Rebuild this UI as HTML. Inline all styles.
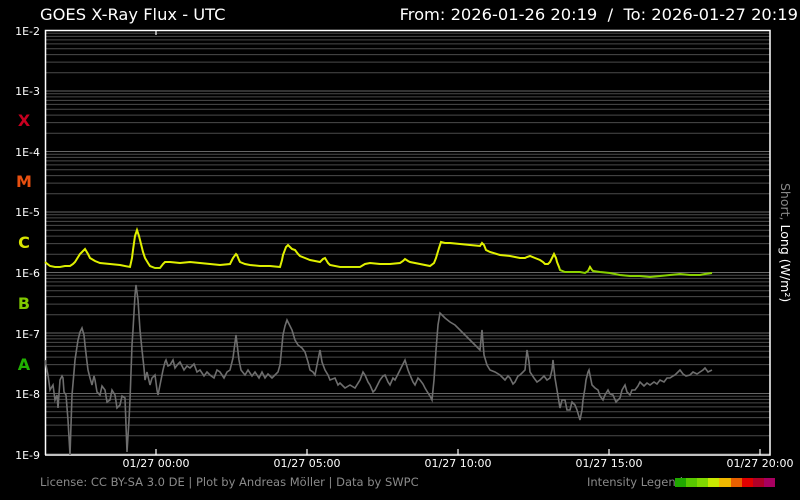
<!DOCTYPE html>
<html><head><meta charset="utf-8"><style>
html,body{margin:0;padding:0;background:#000;width:800px;height:500px;overflow:hidden}
svg{display:block}
text{font-family:"DejaVu Sans","Liberation Sans",sans-serif}
</style></head><body>
<svg width="800" height="500" viewBox="0 0 800 500">
<defs>
<pattern id="g" patternUnits="userSpaceOnUse" x="0" y="30" width="800" height="60.5">
<g stroke="#4a4a4a" stroke-width="1">
<line x1="0" x2="800" y1="0.5" y2="0.5" stroke="#666"/>
<line x1="0" x2="800" y1="3.3" y2="3.3"/>
<line x1="0" x2="800" y1="6.4" y2="6.4"/>
<line x1="0" x2="800" y1="9.9" y2="9.9"/>
<line x1="0" x2="800" y1="13.9" y2="13.9"/>
<line x1="0" x2="800" y1="18.7" y2="18.7"/>
<line x1="0" x2="800" y1="24.6" y2="24.6"/>
<line x1="0" x2="800" y1="32.1" y2="32.1"/>
<line x1="0" x2="800" y1="42.8" y2="42.8"/>
</g>
</pattern>
<linearGradient id="lg" gradientUnits="userSpaceOnUse" x1="0" y1="266" x2="0" y2="272">
<stop offset="0" stop-color="#e0f000"/><stop offset="1" stop-color="#88d000"/>
</linearGradient>
</defs>
<rect width="800" height="500" fill="#000"/>
<rect x="45" y="30" width="725" height="424" fill="url(#g)"/>
<g fill="none" stroke="#fff" stroke-width="1.5">
<polyline points="45.5,455 45.5,30.5 770,30.5 770,455 45,455"/>
</g>
<g stroke="#fff" stroke-width="1.2">
<line x1="156" y1="30" x2="156" y2="35"/><line x1="156" y1="449" x2="156" y2="455"/>
<line x1="307" y1="449" x2="307" y2="455"/><line x1="458" y1="449" x2="458" y2="455"/>
<line x1="609" y1="449" x2="609" y2="455"/><line x1="760" y1="449" x2="760" y2="455"/>
</g>
<polyline fill="none" stroke="#6e6e6e" stroke-width="1.6" points="45,360 48,375 50,390 53,385 55,400 57,395 58,408 60,380 62,376 63,378 64,392 66,395 68,420 70,455 72,395 74,372 75,360 78,340 80,332 82,328 84,335 85,345 87,362 88,370 90,378 92,385 94,376 95,380 97,392 100,395 102,386 105,390 107,402 110,400 112,390 115,395 117,408 120,405 122,396 125,398 127,452 129,420 130,400 132,345 133,330 135,295 136,285 138,300 140,330 142,350 144,368 145,380 147,372 150,385 152,378 155,375 157,390 158,395 160,385 163,370 165,362 166,360 168,366 170,365 173,360 175,368 178,364 180,362 184,370 187,366 190,368 194,364 197,372 200,370 204,376 207,372 210,375 214,378 217,370 220,372 224,378 227,372 230,370 233,358 236,335 239,360 241,370 245,375 248,370 252,376 255,372 259,378 262,372 265,378 268,374 272,378 275,375 278,372 280,365 282,345 283,335 285,326 287,320 290,326 292,330 295,340 298,345 302,348 305,352 308,362 310,370 313,372 315,375 318,360 320,350 322,362 325,370 328,375 330,380 335,378 338,385 340,383 345,388 350,385 355,388 360,380 363,372 365,375 368,382 370,385 373,392 375,390 378,384 380,380 383,376 385,375 388,382 390,385 393,378 395,380 398,374 400,370 403,364 405,360 408,370 410,375 413,382 415,385 418,378 420,380 423,384 425,388 428,393 430,396 432,400 434,380 436,350 438,325 440,313 443,316 445,318 450,322 455,325 460,330 465,335 470,340 475,345 478,348 480,350 482,330 484,355 487,365 490,370 495,372 500,375 503,378 505,380 508,376 510,378 513,384 515,382 518,376 520,375 523,372 525,370 527,350 529,362 530,372 534,378 537,382 540,380 544,376 547,380 550,378 552,370 553,360 555,378 557,390 559,402 560,408 562,400 565,400 567,410 570,410 572,402 575,405 577,410 580,420 582,410 583,400 585,388 586,380 588,372 589,370 591,380 592,385 595,388 598,390 600,396 603,400 605,395 608,390 610,394 613,395 616,402 620,398 622,390 625,385 627,392 630,395 632,390 635,390 638,386 640,382 644,386 647,383 650,385 654,382 657,384 660,380 664,382 667,378 670,378 673,376 675,375 678,372 680,370 683,374 686,376 690,375 693,372 697,374 700,372 703,370 705,368 708,372 712,370"/>
<polyline fill="none" stroke="url(#lg)" stroke-width="2" points="45,262 50,266 55,267 60,267 65,266 70,266 73,264 75,262 80,254 85,249 88,254 90,258 95,261 100,263 110,264 120,265 130,267 132,258 133,250 135,236 137,230 139,236 140,240 143,252 145,258 148,263 150,266 155,268 160,268 163,264 165,262 170,262 180,263 190,262 200,263 210,264 220,265 230,264 232,260 233,258 236,254 237,255 239,260 240,262 245,264 250,265 260,266 270,266 280,267 282,260 283,255 286,247 288,245 292,249 295,250 298,254 300,256 305,258 310,260 315,261 320,262 323,259 325,258 328,263 330,265 340,267 350,267 360,267 365,264 370,263 380,264 390,264 400,263 403,261 405,259 408,261 410,262 420,264 430,266 434,263 436,258 439,248 441,242 445,243 450,243 460,244 470,245 480,246 482,243 484,245 486,250 490,252 500,255 510,256 520,258 525,258 527,257 530,256 535,258 540,260 543,262 545,264 548,264 550,262 552,258 554,254 556,258 557,262 559,267 560,270 565,272 570,272 580,272 585,273 588,271 590,267 592,270 593,271 600,272 610,273 620,275 630,276 640,276 650,277 660,276 670,275 680,274 690,275 700,275 705,274 712,273"/>
<g font-size="11" fill="#fff" text-anchor="end">
<text x="40" y="35">1E-2</text><text x="40" y="95">1E-3</text><text x="40" y="156">1E-4</text>
<text x="40" y="216">1E-5</text><text x="40" y="277">1E-6</text><text x="40" y="338">1E-7</text>
<text x="40" y="398">1E-8</text><text x="40" y="459">1E-9</text>
</g>
<g font-size="16" font-weight="bold" text-anchor="middle">
<text x="24" y="126" fill="#c80020">X</text>
<text x="24" y="187" fill="#e85010">M</text>
<text x="24" y="248" fill="#d8e400">C</text>
<text x="24" y="309" fill="#80c800">B</text>
<text x="24" y="370" fill="#20b000">A</text>
</g>
<g font-size="11" fill="#fff" text-anchor="middle">
<text x="156" y="467">01/27 00:00</text><text x="307" y="467">01/27 05:00</text>
<text x="458" y="467">01/27 10:00</text><text x="609" y="467">01/27 15:00</text>
<text x="760" y="467">01/27 20:00</text>
</g>
<text x="40" y="20" font-size="16.3" fill="#fff">GOES X-Ray Flux - UTC</text>
<text x="798" y="20" font-size="16.3" fill="#fff" text-anchor="end" xml:space="preserve">From: 2026-01-26 20:19  /  To: 2026-01-27 20:19</text>
<text x="40" y="486" font-size="11.5" fill="#8a8a8a">License: CC BY-SA 3.0 DE | Plot by Andreas Möller | Data by SWPC</text>
<text x="587" y="486" font-size="11.5" fill="#8a8a8a">Intensity Legend</text>
<g>
<rect x="675" y="478" width="11" height="9" fill="#20a800"/>
<rect x="686" y="478" width="11" height="9" fill="#58c800"/>
<rect x="697" y="478" width="11" height="9" fill="#80d800"/>
<rect x="708" y="478" width="11" height="9" fill="#c8e800"/>
<rect x="719" y="478" width="12" height="9" fill="#f0b800"/>
<rect x="731" y="478" width="11" height="9" fill="#e86000"/>
<rect x="742" y="478" width="11" height="9" fill="#e00000"/>
<rect x="753" y="478" width="11" height="9" fill="#b00028"/>
<rect x="764" y="478" width="11" height="9" fill="#a80060"/>
</g>
<text transform="translate(781,183) rotate(90)" font-size="12.5"><tspan fill="#888">Short, </tspan><tspan fill="#fff">Long (W/m²)</tspan></text>
</svg>
</body></html>
